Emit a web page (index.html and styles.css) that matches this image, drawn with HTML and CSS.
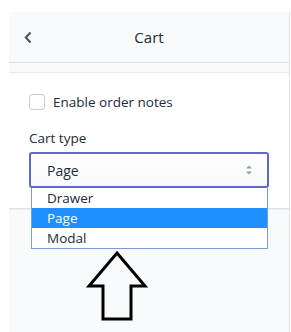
FILE: index.html
```html
<!DOCTYPE html>
<html lang="en">
    <head>
        <meta charset="UTF-8">
        <meta name="viewport" content="width=device-width, initial-scale=1.0">
        <title>Cart</title>
        <link rel="stylesheet" href="styles.css">
    </head>
    <body>
        <div class="panel">
            <div class="header">
                <button class="back" aria-label="Back">
                    <svg width="8" height="13" viewBox="0 0 8 13"><path d="M6.5 1.5 L1.8 6.5 L6.5 11.5" fill="none" stroke="#454f5b" stroke-width="2"/></svg>
                </button>
                <div class="title">Cart</div>
            </div>
            <div class="strip"></div>

            <div class="content">
                <label class="check">
                    <span class="box"></span>
                    <span>Enable order notes</span>
                </label>

                <div class="field-label">Cart type</div>
                <div class="select-wrap">
                    <div class="select">
                        <span>Page</span>
                        <svg class="arrows" width="8" height="12" viewBox="0 0 8 12"><path d="M1 4.5 L4 1.5 L7 4.5 Z M1 7.5 L4 10.5 L7 7.5 Z" fill="#919eab"/></svg>
                    </div>
                    <!--open dropdown-->
                    <ul class="options">
                        <li>Drawer</li>
                        <li class="selected">Page</li>
                        <li>Modal</li>
                    </ul>
                </div>
            </div>
            <div class="rest"></div>
        </div>

        <svg class="pointer" width="62" height="72" viewBox="86 250 62 72">
            <path d="M117 253 L145 286 L131 286 L131 319 L103 319 L103 286 L89 286 Z" fill="none" stroke="#000" stroke-width="3" stroke-linejoin="miter"/>
        </svg>
    </body>
</html>
```

FILE: styles.css
```css
body{
    margin: 0;
    background: #fff;
    font-family: "Open Sans", "Noto Sans", sans-serif;
    color: #212b36;
    overflow: hidden;
}
.panel{
    margin: 12px 0 0 9px;
    width: 280px;
    height: 320px;
    border-right: 1px solid #dfe3e8;
    display: flex;
    flex-direction: column;
    background: #f9fafb;
}
.header{
    height: 50px;
    border-bottom: 1px solid #dfe3e8;
    display: flex;
    align-items: center;
    position: relative;
}
.back{
    background: none;
    border: none;
    padding: 0;
    margin-left: 15px;
    width: 10px;
    height: 14px;
    display: flex;
    align-items: center;
    cursor: pointer;
}
.title{
    position: absolute;
    left: 0;
    right: 0;
    text-align: center;
    font-size: 15px;
    pointer-events: none;
}
.strip{
    height: 9px;
    border-bottom: 1px solid #e6e9ec;
}
.content{
    background: #fff;
    padding: 21px 20px 20px 20px;
    border-bottom: 1px solid #dfe3e8;
}
.check{
    display: flex;
    align-items: center;
    gap: 8px;
    font-size: 13.5px;
    height: 16px;
}
.box{
    width: 14px;
    height: 14px;
    border: 1px solid #c4cdd5;
    border-radius: 3px;
    background: #fff;
}
.field-label{
    margin-top: 18px;
    font-size: 13.5px;
    line-height: 20px;
}
.select-wrap{
    position: relative;
    margin-top: 4px;
}
.select{
    height: 32px;
    border: 2px solid #5c6ac4;
    border-radius: 3px;
    background: linear-gradient(#fff, #f9fafb);
    display: flex;
    align-items: center;
    justify-content: space-between;
    padding: 0 14px 0 16px;
    font-size: 14px;
}
.options{
    position: absolute;
    top: 36px;
    left: 2px;
    width: 235px;
    margin: 0;
    padding: 0;
    list-style: none;
    background: #fff;
    border: 1px solid #7b9bd6;
    border-top: none;
    font-size: 13.5px;
}
.options li{
    height: 20px;
    line-height: 20px;
    padding-left: 15px;
}
.options .selected{
    background: #1e90ff;
    color: #fff;
}
.rest{
    flex: 1;
    background: #f9fafb;
    border-top: 1px solid #eceef0;
}
.pointer{
    position: absolute;
    left: 86px;
    top: 250px;
}
```
